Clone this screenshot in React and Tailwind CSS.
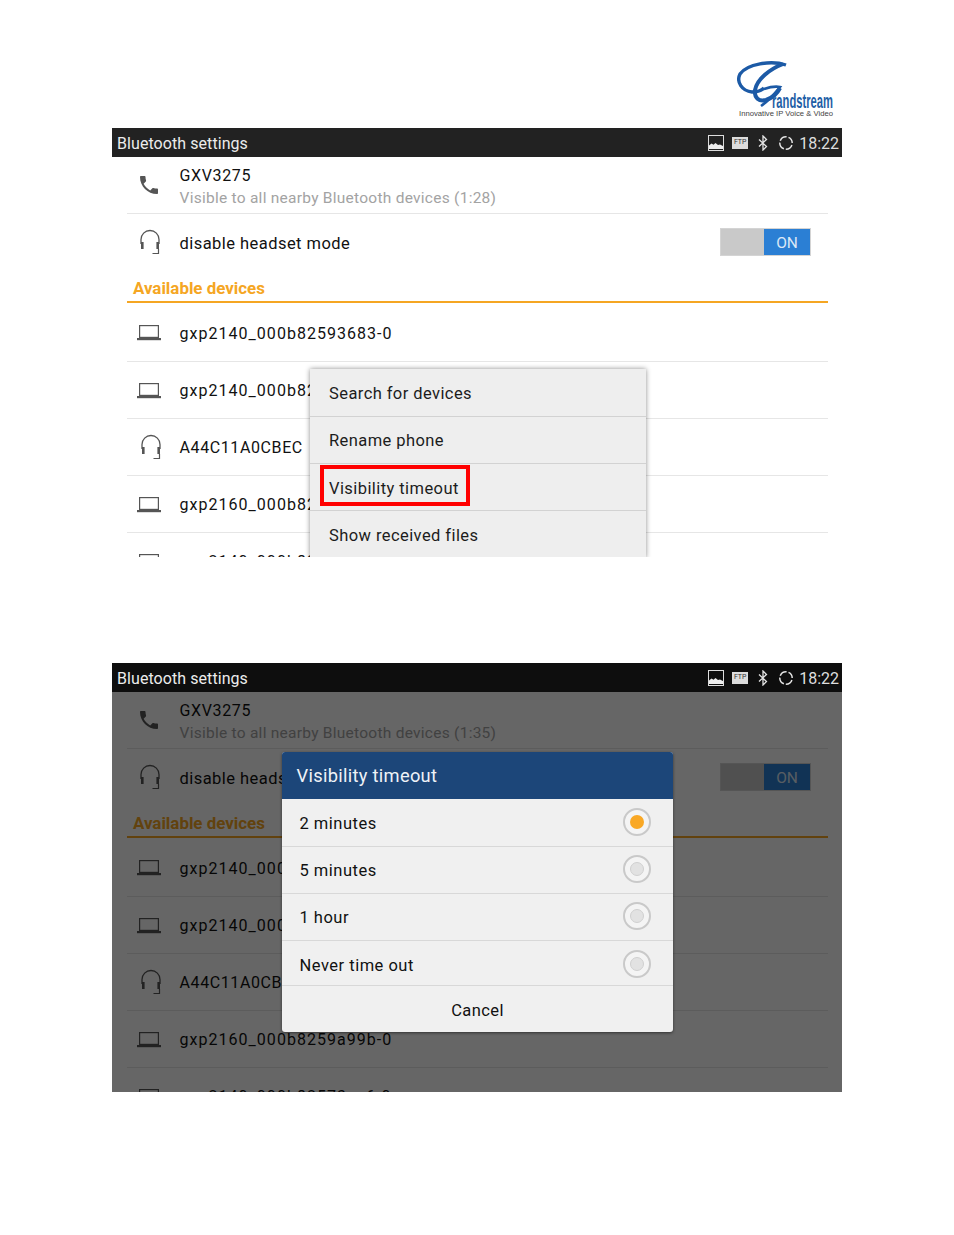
const Phone = () => (
  <svg width="24" height="24" viewBox="0 0 24 24" fill="#555" className="mr-[2px]">
    <path d="M6.62 10.79c1.44 2.83 3.76 5.14 6.59 6.59l2.2-2.2c.27-.27.67-.36 1.02-.24 1.12.37 2.33.57 3.57.57.55 0 1 .45 1 1V20c0 .55-.45 1-1 1-9.39 0-17-7.61-17-17 0-.55.45-1 1-1h3.5c.55 0 1 .45 1 1 0 1.25.2 2.45.57 3.57.11.35.03.74-.25 1.02l-2.2 2.2z" />
  </svg>
);

const Headset = () => (
  <svg width="24" height="28" viewBox="0 0 24 28" fill="none" stroke="#555">
    <path d="M3 16V11.5a9 9 0 0 1 18 0V16" strokeWidth="1.3" />
    <rect x="3" y="14" width="2.6" height="7" fill="#555" stroke="none" />
    <rect x="18.4" y="14" width="2.6" height="7" fill="#555" stroke="none" />
    <path d="M20.5 21v4.5h-6" strokeWidth="1.2" />
  </svg>
);

const Laptop = () => (
  <svg width="24" height="16" viewBox="0 0 24 16" fill="none" className="mr-[4px] mt-[2px]">
    <rect x="2.6" y="0.6" width="18.8" height="11.8" stroke="#555" strokeWidth="1.2" />
    <rect x="0" y="13" width="24" height="2.2" fill="#555" />
  </svg>
);

const StatusIcons = () => (
  <div className="flex items-center">
    <svg width="16" height="16" viewBox="0 0 16 16" className="mr-[8px]">
      <rect x="0.5" y="0.5" width="15" height="15" fill="none" stroke="#ddd" />
      <path d="M1 14V10.5l2.5-2 2 1.2 2-1.7 2.5 2 2-.6L15 11v3z" fill="#eee" />
    </svg>
    <div className="mr-[10px] flex h-[12px] w-[16px] items-center justify-center bg-[#dcdcdc] text-[7px] leading-none text-[#333]">FTP</div>
    <svg width="10" height="16" viewBox="0 0 10 16" fill="none" stroke="#e4e4e4" strokeWidth="1.3" className="mr-[10px]">
      <path d="M1 4.5l7.5 7L5 15V1l3.5 3.5L1 11.5" />
    </svg>
    <svg width="16" height="16" viewBox="0 0 16 16" fill="none" className="mr-[5px]">
      <circle cx="8" cy="8" r="6.2" stroke="#e4e4e4" strokeWidth="1.5" strokeDasharray="7.7 2" strokeDashoffset="-2" />
    </svg>
    <span className="pt-[2px] text-[16px] leading-none text-[#dedede]">18:22</span>
  </div>
);

const Row = ({ icon, text, tall, tracking }) => (
  <div className={`flex items-center border-b border-[#e6e6e6] ${tall ? "h-[59px]" : "h-[57px]"}`}>
    <div className="flex w-[53px] justify-center pl-[1px] pr-[7px]">{icon}</div>
    <span className={`-ml-[0.5px] text-[16px] text-[#111] ${tall ? "pt-[4px]" : "pt-[2px]"} ${tracking}`}>{text}</span>
  </div>
);

const Screen = ({ dim, timer, children, className }) => (
  <div className={`relative h-[429px] w-[730px] overflow-hidden bg-white ${className}`}>
    <div className={`relative z-20 flex h-[29px] items-center justify-between pl-[5px] pr-[3px] ${dim ? "bg-[#0e0e0e]" : "bg-[#222222]"}`}>
      <span className="pt-[2px] text-[16px] tracking-[0.07px] text-[#ececec]">Bluetooth settings</span>
      <StatusIcons />
    </div>
    <div className="pl-[15px] pr-[14px]">
      <div className="flex h-[57px] items-center border-b border-[#e6e6e6]">
        <div className="flex w-[53px] justify-center pr-[7px]"><Phone /></div>
        <div className="-ml-[0.5px] flex flex-col pt-[4px]">
          <span className="text-[16px] leading-[22px] tracking-[0.63px] text-[#111]">GXV3275</span>
          <span className="text-[15.5px] leading-[22px] tracking-[0.26px] text-[#a3a3a3]">Visible to all nearby Bluetooth devices ({timer})</span>
        </div>
      </div>
      <div className="flex h-[56px] items-center">
        <div className="flex w-[53px] justify-center pr-[7px]"><Headset /></div>
        <span className="-ml-[0.5px] pt-[4px] text-[16.5px] tracking-[0.45px] text-[#111]">disable headset mode</span>
        <div className="ml-auto mr-[17px] flex h-[28px] w-[91px] border border-[#d4d4d4] bg-[#c9c9c9]">
          <div className="w-[43px]" />
          <div className="flex flex-1 items-center justify-center bg-[#2b7fd4] pt-[3px] text-[15.5px] text-[#dbe8f6]">ON</div>
        </div>
      </div>
      <div className="flex h-[33px] items-center border-b-2 border-[#f5a623] pl-[6px] pt-[7px] text-[16.9px] font-bold text-[#f5a623]">Available devices</div>
      <Row tall icon={<Laptop />} text="gxp2140_000b82593683-0" tracking="tracking-[1.03px]" />
      <Row icon={<Laptop />} text="gxp2140_000b82593a11-0" tracking="tracking-[1.03px]" />
      <Row icon={<Headset />} text="A44C11A0CBEC" tracking="tracking-[0.6px]" />
      <Row icon={<Laptop />} text="gxp2160_000b8259a99b-0" tracking="tracking-[1.03px]" />
      <Row icon={<Laptop />} text="gxp2140_000b82573ee6-0" tracking="tracking-[1.03px]" />
    </div>
    {children}
  </div>
);

const MenuItem = ({ label, h, last, pt }) => (
  <div className={`flex items-center pl-[19px] text-[16.5px] tracking-[0.42px] text-[#1c1c1c] ${h} ${pt} ${last ? "" : "border-b border-[#d2d2d2]"}`}>{label}</div>
);

const Radio = ({ on, mb }) => (
  <div className={`flex h-[28px] w-[28px] items-center justify-center rounded-full border-2 border-[#c9c9c9] bg-[#f4f4f4] ${mb}`}>
    <div className={`h-[14px] w-[14px] rounded-full ${on ? "bg-[#f9a825]" : "border border-[#d0d0d0] bg-[#e2e2e2]"}`} />
  </div>
);

const Option = ({ label, on, h, pt, mb }) => (
  <div className={`flex items-center justify-between border-b border-[#d8d8d8] pl-[17.5px] pr-[22px] text-[16.5px] tracking-[0.5px] text-[#111] ${h}`}>
    <span className={pt}>{label}</span>
    <Radio on={on} mb={mb} />
  </div>
);

const Logo = () => (
  <svg width="100" height="60" viewBox="0 0 100 60">
    <path d="M49 5C34 0 10 4 3 14c-4 8 2 17 12 18 5 0 9-1 12-4" fill="none" stroke="#1c5aa6" strokeWidth="3.4" />
    <path d="M46 4C33 9 20 19 18 30c-1 8 4 12 11 10 6-2 11-6 14-12" fill="none" stroke="#1c5aa6" strokeWidth="4" />
    <path d="M27 29c6-2 11-3 16-2-4 5-9 12-19 19" fill="none" stroke="#1c5aa6" strokeWidth="2.6" />
    <text x="35" y="48" textLength="61" lengthAdjust="spacingAndGlyphs" fontFamily="Liberation Sans, sans-serif" fontSize="21" fontWeight="700" fill="#1f5fa6">randstream</text>
    <text x="2" y="55.5" textLength="94" lengthAdjust="spacingAndGlyphs" fontFamily="Liberation Sans, sans-serif" fontSize="6.4" fill="#444">Innovative IP Voice &amp; Video</text>
  </svg>
);

export default function App() {
  return (
    <div className="h-[1235px] w-[954px] bg-white font-['Roboto',sans-serif]">
      <div className="flex h-[128px] items-start justify-end pr-[117px] pt-[60px]">
        <Logo />
      </div>
      <Screen timer="1:28" className="ml-[112px]">
        <div className="absolute left-[198px] top-[241px] w-[335.5px] bg-[#eeeeee] shadow-[0_0_5px_rgba(0,0,0,0.45)]">
          <MenuItem label="Search for devices" h="h-[48px]" pt="pt-[4px]" />
          <MenuItem label="Rename phone" h="h-[47px]" pt="pt-[3px]" />
          <MenuItem label="Visibility timeout" h="h-[47px]" pt="pt-[4px]" />
          <MenuItem label="Show received files" h="h-[47px]" pt="pt-[4px]" last />
          <div className="absolute left-[10px] top-[96px] h-[41px] w-[150px] border-[4px] border-[#ff0000]" />
        </div>
      </Screen>
      <Screen dim timer="1:35" className="ml-[112px] mt-[106px]">
        <div className="absolute inset-0 top-[29px] z-10 bg-black/60" />
        <div className="absolute left-[170px] top-[89px] z-10 w-[391px] overflow-hidden rounded-[3px] bg-[#f0f0f0] shadow-[0_1px_3px_rgba(0,0,0,0.5)]">
          <div className="flex h-[47px] items-center bg-[#1c4679] pl-[14.5px] text-[18.3px] tracking-[0.3px] text-[#eef2f7]">Visibility timeout</div>
          <Option label="2 minutes" on h="h-[48px]" pt="pt-[4px]" mb="mb-[2px]" />
          <Option label="5 minutes" h="h-[47px]" pt="pt-[2px]" mb="mb-[2px]" />
          <Option label="1 hour" h="h-[47px]" pt="pt-[2px]" mb="mb-[2px]" />
          <Option label="Never time out" h="h-[45px]" pt="pt-[6px]" mb="mt-[1px]" />
          <div className="flex h-[46px] items-center justify-center pt-[4px] text-[16.5px] tracking-[0.4px] text-[#111]">Cancel</div>
        </div>
      </Screen>
    </div>
  );
}
